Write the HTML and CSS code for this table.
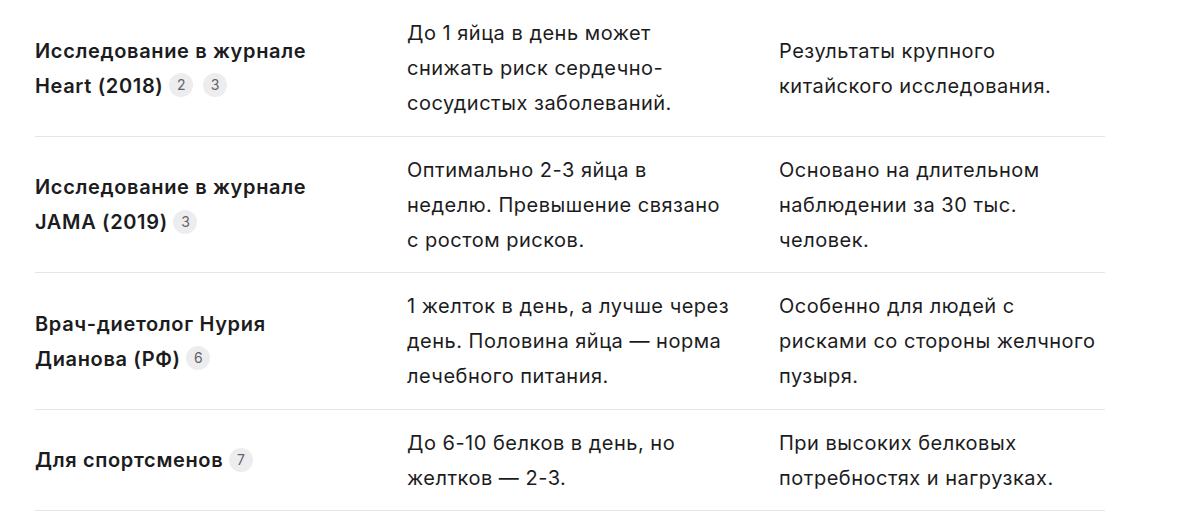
FILE: index.html
```html
<!DOCTYPE html>
<html lang="ru">
<head>
<meta charset="utf-8">
<link rel="stylesheet" href="styles.css">
</head>
<body>
<table class="recs">
  <colgroup>
    <col class="c1"><col class="c2"><col class="c3">
  </colgroup>
  <tbody>
    <tr>
      <td class="src">Исследование в журнале Heart (2018) <span class="badges"><span class="badge">2</span><span class="badge">3</span></span></td>
      <td>До 1 яйца в день может снижать риск сердечно-сосудистых заболеваний.</td>
      <td>Результаты крупного китайского исследования.</td>
    </tr>
    <tr>
      <td class="src">Исследование в журнале JAMA (2019) <span class="badges"><span class="badge">3</span></span></td>
      <td>Оптимально 2-3 яйца в неделю. Превышение связано с ростом рисков.</td>
      <td>Основано на длительном наблюдении за 30 тыс. человек.</td>
    </tr>
    <tr>
      <td class="src">Врач-диетолог Нурия Дианова (РФ) <span class="badges"><span class="badge">6</span></span></td>
      <td>1 желток в день, а лучше через день. Половина яйца — норма лечебного питания.</td>
      <td>Особенно для людей с рисками со стороны желчного пузыря.</td>
    </tr>
    <tr>
      <td class="src">Для спортсменов <span class="badges"><span class="badge">7</span></span></td>
      <td>До 6-10 белков в день, но желтков — 2-3.</td>
      <td>При высоких белковых потребностях и нагрузках.</td>
    </tr>
  </tbody>
</table>
</body>
</html>
```

FILE: styles.css
```css
html, body {
  margin: 0;
  padding: 0;
  background: #ffffff;
}

body {
  font-family: Inter, "Noto Sans", "Liberation Sans", sans-serif;
  color: #1c1c1e;
  font-size: 20px;
  letter-spacing: 0.5px;
}

.recs {
  margin-left: 35px;
  width: 1070px;
  table-layout: fixed;
  border-collapse: collapse;
}

.c1 { width: 348px; }
.c2 { width: 372px; }
.c3 { width: 350px; }

.recs td {
  padding: 16px 24px 14.5px;
  line-height: 35px;
  vertical-align: middle;
  border-bottom: 1px solid #e5e5e5;
}

.recs td:first-child { padding-left: 0; }
.recs td:last-child { padding-right: 0; }

.src {
  font-weight: 600;
  letter-spacing: 0.65px;
}

.badges {
  display: inline-flex;
  gap: 10px;
  vertical-align: middle;
  position: relative;
  top: -2px;
  letter-spacing: 0;
}

.badge {
  display: inline-flex;
  align-items: center;
  justify-content: center;
  width: 24px;
  height: 24px;
  border-radius: 50%;
  background: #ededf0;
  color: #636368;
  font-size: 14px;
  font-weight: 400;
  line-height: 1;
}
```
